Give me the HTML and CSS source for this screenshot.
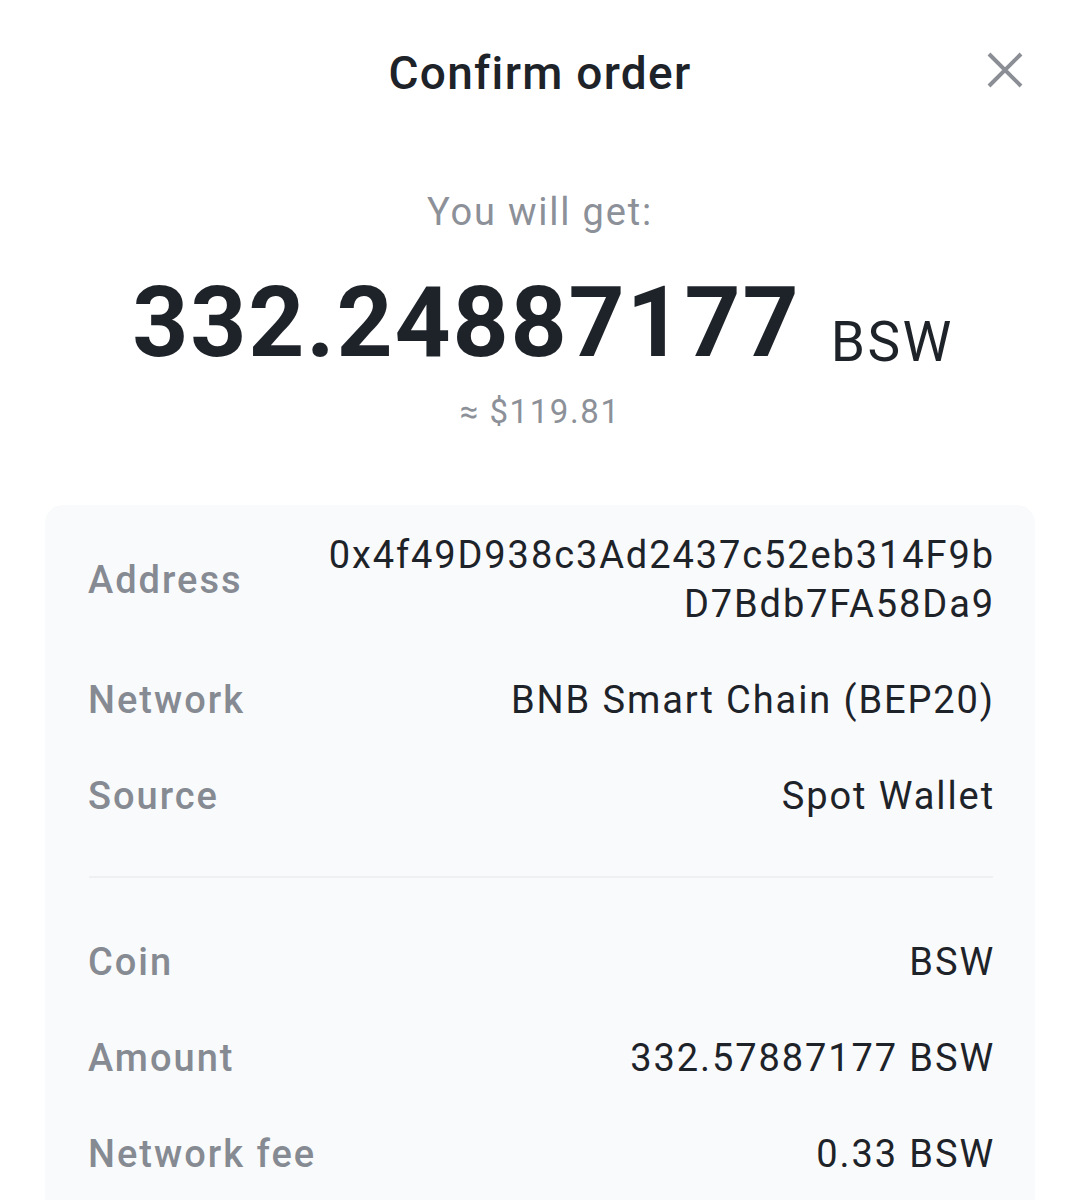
FILE: index.html
```html
<!DOCTYPE html>
<html lang="en">

<head>
    <meta charset="UTF-8">
    <meta name="viewport" content="width=device-width, initial-scale=1.0">
    <title>Confirm order</title>
    <link rel="stylesheet" href="styles.css">
</head>

<body>

    <div class="sheet">
        <div class="header">
            <span></span>
            <h1 class="title">Confirm order</h1>
            <button class="close" aria-label="Close">
                <svg width="36" height="36" viewBox="0 0 36 36">
                    <path d="M2 2 L34 34 M34 2 L2 34" stroke="#8b8e94" stroke-width="4" fill="none" />
                </svg>
            </button>
        </div>

        <div class="summary">
            <div class="get-label">You will get:</div>
            <div class="get-amount">
                <span class="big">332.24887177</span><span class="unit">BSW</span>
            </div>
            <div class="fiat">&asymp; $119.81</div>
        </div>

        <div class="card">
            <div class="group">
                <div class="row">
                    <div class="label">Address</div>
                    <div class="value">0x4f49D938c3Ad2437c52eb314F9b<br>D7Bdb7FA58Da9</div>
                </div>
                <div class="row">
                    <div class="label">Network</div>
                    <div class="value">BNB Smart Chain (BEP20)</div>
                </div>
                <div class="row">
                    <div class="label">Source</div>
                    <div class="value">Spot Wallet</div>
                </div>
            </div>

            <div class="divider"></div>

            <div class="group">
                <div class="row">
                    <div class="label">Coin</div>
                    <div class="value">BSW</div>
                </div>
                <div class="row">
                    <div class="label">Amount</div>
                    <div class="value">332.57887177 BSW</div>
                </div>
                <div class="row">
                    <div class="label">Network fee</div>
                    <div class="value">0.33 BSW</div>
                </div>
            </div>
        </div>
    </div>

</body>

</html>
```

FILE: styles.css
```css
* {
    margin: 0;
    padding: 0;
    box-sizing: border-box;
}

body {
    font-family: Roboto, 'Liberation Sans', sans-serif;
    background-color: #ffffff;
    color: #1e2329;
    overflow: hidden;
}

.sheet {
    padding: 0 45px;
}

.header {
    height: 148px;
    display: grid;
    grid-template-columns: 1fr auto 1fr;
    align-items: center;
}

.title {
    font-size: 46px;
    font-weight: 500;
    letter-spacing: 1.3px;
    color: #1e2329;
    margin-top: -2px;
}

.close {
    justify-self: end;
    margin-right: 12px;
    margin-top: -8px;
    background: none;
    border: none;
    width: 36px;
    height: 36px;
    cursor: pointer;
}

.summary {
    text-align: center;
}

.get-label {
    margin-top: 40px;
    font-size: 38px;
    line-height: 48px;
    letter-spacing: 1.8px;
    color: #8c9098;
}

.get-amount {
    margin-top: 32px;
    height: 110px;
    line-height: 110px;
    white-space: nowrap;
    padding-left: 6px;
}

.big {
    font-size: 98px;
    font-weight: 700;
    letter-spacing: 1.8px;
}

.unit {
    margin-left: 30px;
    font-size: 55px;
    font-weight: 400;
    letter-spacing: 2.5px;
    vertical-align: -5px;
}

.fiat {
    margin-top: 14px;
    font-size: 33px;
    line-height: 40px;
    letter-spacing: 1.6px;
    color: #8c9098;
}

.card {
    margin-top: 73px;
    background-color: #f9fafb;
    border-radius: 18px;
    padding: 26px 40px 60px 43px;
}

.group {
    display: flex;
    flex-direction: column;
    gap: 47px;
}

.row {
    display: flex;
    justify-content: space-between;
    align-items: center;
    font-size: 38px;
    line-height: 49px;
}

.label {
    color: #868a92;
    font-weight: 500;
    letter-spacing: 2px;
}

.value {
    text-align: right;
    color: #1e2329;
    letter-spacing: 1.9px;
}

.divider {
    height: 2px;
    background-color: #eef0f2;
    margin: 55px 2px 60px 1px;
}
```
